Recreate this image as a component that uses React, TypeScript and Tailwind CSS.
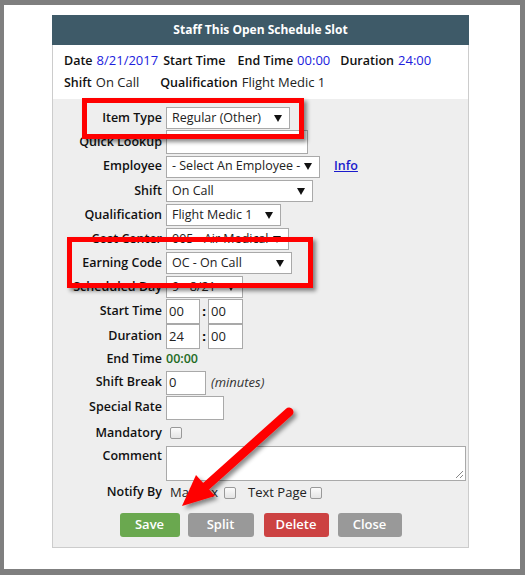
import React from "react";

function Tri() {
  return (
    <svg width="8" height="7" viewBox="0 0 8 7" className="shrink-0">
      <polygon points="0,0 8,0 4,7" fill="#111" />
    </svg>
  );
}

function Sel({ w, text }: { w: string; text: string }) {
  return (
    <div
      className={`h-[22px] ${w} border border-[#a9a9a9] bg-white flex items-center pl-[5px] pr-[7px] text-[12.5px] text-[#222] whitespace-nowrap overflow-hidden`}
    >
      <span className="flex-1 overflow-hidden">{text}</span>
      <Tri />
    </div>
  );
}

function Row({
  label,
  h,
  children,
  top,
}: {
  label: string;
  h: string;
  children?: React.ReactNode;
  top?: boolean;
}) {
  return (
    <div className={`flex ${top ? "items-start" : "items-center"} ${h}`}>
      <div
        className={`w-[109px] shrink-0 text-right font-semibold text-[12.5px] text-[#111] ${top ? "pt-[1px]" : ""}`}
      >
        {label}
      </div>
      <div className="ml-[4px] flex items-center">{children}</div>
    </div>
  );
}

function Box({ w, h, text }: { w: string; h: string; text?: string }) {
  return (
    <div
      className={`${w} ${h} border border-[#a9a9a9] bg-white flex items-center pl-[2px] text-[13px] text-[#222]`}
    >
      {text}
    </div>
  );
}

function Check() {
  return (
    <div className="w-[12px] h-[12px] rounded-[2px] border border-[#999] bg-gradient-to-b from-[#fbfbfb] to-[#e4e4e4]" />
  );
}

export default function App() {
  return (
    <div className="relative w-[525px] h-[575px] bg-[#7f7f7f] pt-[5px] pl-[4px] pr-[5px] pb-[6px] font-['Open_Sans','Liberation_Sans',sans-serif]">
      <div className="w-full h-full bg-white pt-[10px] pl-[48px]">
        <div className="w-[417px]">
          <div className="h-[30px] bg-[#3e5a68] flex items-center justify-center text-white font-bold text-[12px]">
            Staff This Open Schedule Slot
          </div>
          <div className="border-x border-[#cccccc] bg-white pl-[11px] pt-[5px] pb-[5px] text-[13px] whitespace-nowrap">
            <div className="h-[22px] flex items-center">
              <span className="font-semibold text-[12.5px] text-[#111]">Date</span>
              <span className="ml-[4px] text-[#2020dd]">8/21/2017</span>
              <span className="font-semibold text-[12.5px] text-[#111] ml-[5px]">Start Time</span>
              <span className="font-semibold text-[12.5px] text-[#111] ml-[12px]">End Time</span>
              <span className="ml-[4px] text-[#2020dd]">00:00</span>
              <span className="font-semibold text-[12.5px] text-[#111] ml-[10px]">Duration</span>
              <span className="ml-[4px] text-[#2020dd]">24:00</span>
            </div>
            <div className="h-[22px] flex items-center">
              <span className="font-semibold text-[12.5px] text-[#111]">Shift</span>
              <span className="ml-[4px] text-[#222]">On Call</span>
              <span className="font-semibold text-[12.5px] text-[#111] ml-[21px]">Qualification</span>
              <span className="ml-[4px] text-[#222]">Flight Medic 1</span>
            </div>
          </div>
          <div className="border-x border-b border-[#cccccc] bg-[#eeeeee] pt-[7px] pb-[10px]">
            <Row label="Item Type" h="h-[24px]">
              <Sel w="w-[124px]" text="Regular (Other)" />
            </Row>
            <Row label="Quick Lookup" h="h-[24px]">
              <Box w="w-[142px]" h="h-[24px]" />
            </Row>
            <Row label="Employee" h="h-[25px]">
              <Sel w="w-[154px]" text="- Select An Employee -" />
              <span className="ml-[14px] text-[12.5px] font-semibold text-[#1a1acc] underline">Info</span>
            </Row>
            <Row label="Shift" h="h-[24px]">
              <Sel w="w-[147px]" text="On Call" />
            </Row>
            <Row label="Qualification" h="h-[24px]">
              <Sel w="w-[115px]" text="Flight Medic 1" />
            </Row>
            <Row label="Cost Center" h="h-[24px]">
              <Sel w="w-[123px]" text="005 - Air Medical" />
            </Row>
            <Row label="Earning Code" h="h-[24px]">
              <Sel w="w-[126px]" text="OC - On Call" />
            </Row>
            <Row label="Scheduled Day" h="h-[24px]">
              <Sel w="w-[77px]" text="9 - 8/21" />
            </Row>
            <Row label="Start Time" h="h-[25px]">
              <Box w="w-[34px]" h="h-[25px]" text="00" />
              <span className="w-[8px] text-center font-bold text-[13px]">:</span>
              <Box w="w-[35px]" h="h-[25px]" text="00" />
            </Row>
            <Row label="Duration" h="h-[25px]">
              <Box w="w-[34px]" h="h-[25px]" text="24" />
              <span className="w-[8px] text-center font-bold text-[13px]">:</span>
              <Box w="w-[35px]" h="h-[25px]" text="00" />
            </Row>
            <Row label="End Time" h="h-[21px]">
              <span className="text-[12.5px] font-semibold text-[#1f6b1f]">00:00</span>
            </Row>
            <Row label="Shift Break" h="h-[25px]">
              <Box w="w-[40px]" h="h-[24px]" text="0" />
              <span className="ml-[5px] italic text-[13px] text-[#333]">(minutes)</span>
            </Row>
            <Row label="Special Rate" h="h-[25px]">
              <Box w="w-[58px]" h="h-[24px]" />
            </Row>
            <Row label="Mandatory" h="h-[26px]">
              <div className="ml-[4px]">
                <Check />
              </div>
            </Row>
            <Row label="Comment" h="h-[36px]" top>
              <div className="relative w-[300px] h-[35px] border border-[#a9a9a9] bg-white">
                <svg width="9" height="9" viewBox="0 0 9 9" className="absolute right-[1px] bottom-[1px]">
                  <line x1="8" y1="1" x2="1" y2="8" stroke="#888" strokeWidth="1" />
                  <line x1="8" y1="5" x2="5" y2="8" stroke="#888" strokeWidth="1" />
                </svg>
              </div>
            </Row>
            <Row label="Notify By" h="h-[21px]">
              <span className="ml-[4px] text-[13px] text-[#222]">Mailbox</span>
              <div className="ml-[6px]">
                <Check />
              </div>
              <span className="ml-[12px] text-[13px] text-[#222]">Text Page</span>
              <div className="ml-[3px]">
                <Check />
              </div>
            </Row>
            <div className="mt-[10px] flex justify-center gap-[8px] text-[13px] font-semibold text-white">
              <div className="w-[60px] h-[24px] rounded-[3px] bg-[#6aa84f] flex items-center justify-center">Save</div>
              <div className="w-[66px] h-[24px] rounded-[3px] bg-[#999999] flex items-center justify-center">Split</div>
              <div className="w-[65px] h-[24px] rounded-[3px] bg-[#cc4242] flex items-center justify-center ml-[2px]">Delete</div>
              <div className="w-[64px] h-[24px] rounded-[3px] bg-[#999999] flex items-center justify-center ml-[1px]">Close</div>
            </div>
          </div>
        </div>
      </div>

      <div className="absolute left-[82px] top-[98px] w-[222px] h-[41px] border-[5px] border-[#ff0000] shadow-[3px_3px_4px_rgba(0,0,0,0.45)]" />
      <div className="absolute left-[67px] top-[237px] w-[246px] h-[51px] border-[5px] border-[#ff0000] shadow-[3px_3px_4px_rgba(0,0,0,0.45)]" />

      <svg className="absolute left-0 top-0 pointer-events-none" width="525" height="575" viewBox="0 0 525 575">
        <defs>
          <filter id="ds" x="-20%" y="-20%" width="140%" height="140%">
            <feDropShadow dx="3" dy="3" stdDeviation="2" floodColor="#000" floodOpacity="0.45" />
          </filter>
        </defs>
        <g filter="url(#ds)">
          <line x1="289" y1="412" x2="203" y2="489" stroke="#ff0000" strokeWidth="9" strokeLinecap="round" />
          <polygon points="182,506 215,496 196,475" fill="#ff0000" />
        </g>
      </svg>
    </div>
  );
}
